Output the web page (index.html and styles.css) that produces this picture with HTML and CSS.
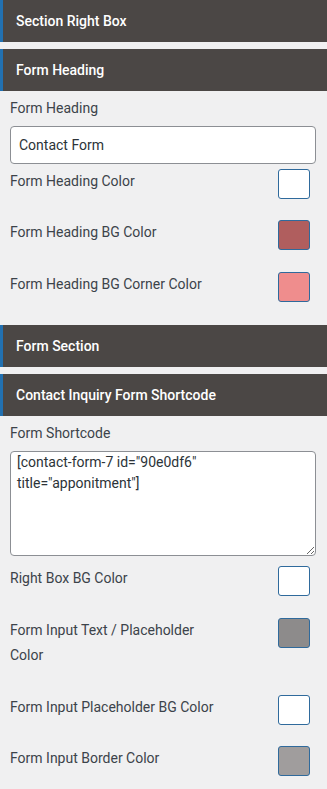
FILE: index.html
```html
<!DOCTYPE html>
<html lang="en">
<head>
    <meta charset="UTF-8">
    <meta name="viewport" content="width=device-width, initial-scale=1.0">
    <title>Section Right Box</title>
    <link rel="stylesheet" href="styles.css">
</head>
<body>
    <div class="section-head">Section Right Box</div>

    <div class="sub-head">Form Heading</div>
    <div class="group">
        <div class="field">
            <label>Form Heading</label>
            <input class="text-input" type="text" value="Contact Form">
        </div>
        <div class="color-row">
            <span class="color-label">Form Heading Color</span>
            <button class="swatch" style="background:#ffffff"></button>
        </div>
        <div class="color-row">
            <span class="color-label">Form Heading BG Color</span>
            <button class="swatch" style="background:#b05e5e"></button>
        </div>
        <div class="color-row">
            <span class="color-label">Form Heading BG Corner Color</span>
            <button class="swatch" style="background:#ef8d8d"></button>
        </div>
    </div>

    <div class="section-head">Form Section</div>

    <div class="sub-head">Contact Inquiry Form Shortcode</div>
    <div class="group">
        <div class="field">
            <label>Form Shortcode</label>
            <textarea class="text-area">[contact-form-7 id="90e0df6" title="apponitment"]</textarea>
        </div>
        <div class="color-row">
            <span class="color-label">Right Box BG Color</span>
            <button class="swatch" style="background:#ffffff"></button>
        </div>
        <div class="color-row">
            <span class="color-label">Form Input Text / Placeholder Color</span>
            <button class="swatch" style="background:#8d8b8b"></button>
        </div>
        <div class="color-row">
            <span class="color-label">Form Input Placeholder BG Color</span>
            <button class="swatch" style="background:#ffffff"></button>
        </div>
        <div class="color-row">
            <span class="color-label">Form Input Border Color</span>
            <button class="swatch" style="background:#a09d9d"></button>
        </div>
    </div>
</body>
</html>
```

FILE: styles.css
```css
body {
    margin: 0;
    padding: 0;
    background-color: #f0f0f1;
    font-family: Roboto, "Liberation Sans", sans-serif;
    font-size: 14px;
    color: #3c434a;
}

.section-head,
.sub-head {
    display: flex;
    align-items: center;
    height: 42px;
    padding-left: 13px;
    border-left: 3px solid #2271b1;
    background-color: #4b4745;
    color: #fff;
    font-weight: 500;
    font-size: 14px;
}

.section-head {
    margin-bottom: 7px;
}

.sub-head {
    margin-bottom: 5px;
}

.group {
    padding: 0 11px 2px 10px;
}

.field label {
    display: block;
    line-height: 25.5px;
    margin-bottom: 4px;
}

.text-input {
    display: block;
    box-sizing: border-box;
    width: 100%;
    height: 38px;
    margin: 0 0 5px;
    padding: 0 8px;
    border: 1px solid #8c8f94;
    border-radius: 4px;
    background-color: #fff;
    font-family: Roboto, "Liberation Sans", sans-serif;
    font-size: 14px;
    color: #2c3338;
}

.text-area {
    display: block;
    box-sizing: border-box;
    width: 100%;
    height: 105.5px;
    margin: 0 0 10px;
    padding: 0 6px;
    border: 1px solid #8c8f94;
    border-radius: 4px;
    background-color: #fff;
    font-family: Roboto, "Liberation Sans", sans-serif;
    font-size: 14px;
    line-height: 21px;
    color: #2c3338;
}

.color-row {
    display: flex;
    justify-content: space-between;
    align-items: flex-start;
    padding-right: 6px;
}

.color-label {
    width: 215px;
    line-height: 25.5px;
    padding-bottom: 26px;
}

.swatch {
    box-sizing: border-box;
    width: 32px;
    height: 30px;
    margin: 0;
    padding: 0;
    border: 1px solid #2f6a9c;
    border-radius: 3px;
    cursor: pointer;
}
```
